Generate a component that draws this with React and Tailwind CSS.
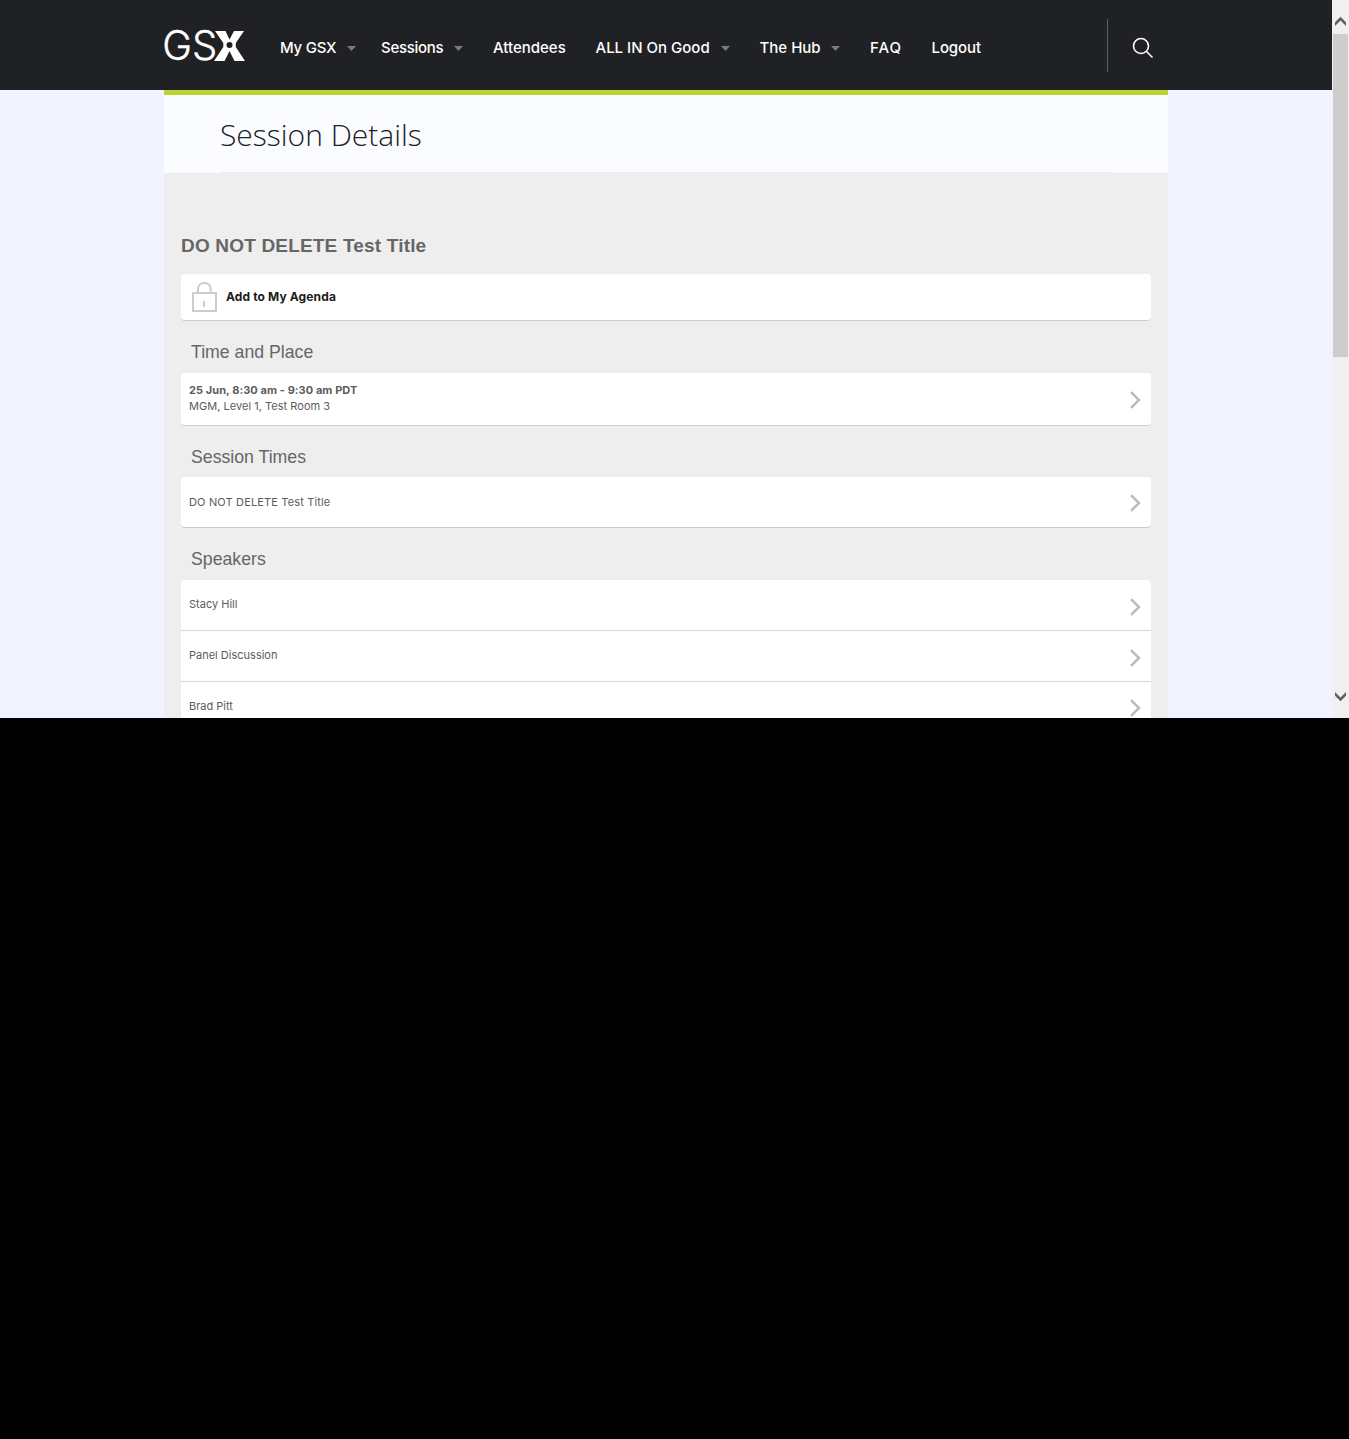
import React from "react";

function Logo() {
  return (
    <svg className="block h-[33px] w-[82px] overflow-visible" viewBox="0 0 82 33" role="img" aria-label="GSX">
      <text x="-1.8" y="30.3" fill="#fff" stroke="#fff" strokeWidth="0.35" fontFamily="Inter, sans-serif" fontWeight="300" fontSize="40.5" textLength="55" lengthAdjust="spacingAndGlyphs">GS</text>
      <path d="M51 1H61.5L65.5 9.5L70 1H80L71.8 13V17L81 31H70.5L65.5 21L60.5 31H50L59.3 17V13Z" fill="#fff" />
      <circle cx="65.5" cy="15" r="5" fill="#fff" />
      <circle cx="65.5" cy="15" r="3" fill="#202124" />
    </svg>
  );
}

function Caret({ className }) {
  return (
    <svg className={`block h-[5px] w-[9px] shrink-0 ${className}`} viewBox="0 0 9 5">
      <path d="M0 0H9L4.5 5Z" fill="#7a7b7d" />
    </svg>
  );
}

function NavItem({ label, width, menu }) {
  return (
    <a className={`flex shrink-0 items-center ${width}`}>
      <span>{label}</span>
      {menu && <Caret className="ml-auto" />}
    </a>
  );
}

function Chevron({ className = "" }) {
  return (
    <svg className={`block h-[18px] w-[12px] shrink-0 ${className}`} viewBox="0 0 12 18" fill="none">
      <path d="M1 1.2L9 9L1 16.8" stroke="#bbb" strokeWidth="2.5" />
    </svg>
  );
}

function Lock() {
  return (
    <svg className="block h-[31px] w-[26px] shrink-0" viewBox="0 0 26 31" fill="none" stroke="#ccc" strokeWidth="2">
      <rect x="2" y="11" width="23" height="18" />
      <path d="M7 11V7C7 3.3 9.8 0.9 13.3 0.9S19.6 3.3 19.6 7V11" />
      <path d="M13 19V25" />
    </svg>
  );
}

function Heading({ children, className }) {
  return (
    <h2 className={`flex items-center pl-[10px] font-['Liberation_Sans',sans-serif] text-[17.7px] leading-none text-[#666] ${className}`}>
      {children}
    </h2>
  );
}

function SpeakerRow({ name }) {
  return (
    <li className="flex h-[51px] shrink-0 border-b border-[#d6d6d6] pr-[9px] pl-2">
      <span className="mt-[16px] flex-1 leading-4">{name}</span>
      <Chevron className="mt-[18px]" />
    </li>
  );
}

function Scrollbar() {
  return (
    <div className="flex w-[17px] shrink-0 flex-col items-center bg-[#f0f0f0]">
      <svg className="mt-4 block h-[10px] w-[11px]" viewBox="0 0 11 10">
        <path d="M0 6.3L5.5 0.8L11 6.3V10L5.5 4.5L0 10Z" fill="#606060" />
      </svg>
      <div className="mt-2 h-[323px] w-[15px] bg-[#cdcdcd]" />
      <svg className="mt-auto mb-4 block h-[10px] w-[11px]" viewBox="0 0 11 10">
        <path d="M0 3.7L5.5 9.2L11 3.7V0L5.5 5.5L0 0Z" fill="#606060" />
      </svg>
    </div>
  );
}

export default function App() {
  return (
    <div className="h-[1439px] w-[1349px] overflow-hidden bg-black font-[Inter,sans-serif]">
      <div className="flex h-[718px] overflow-hidden">
        <div className="flex w-[1332px] shrink-0 flex-col overflow-hidden bg-[#f1f4ff]">
          <header className="h-[90px] shrink-0 bg-[#202124]">
            <div className="ml-[164px] flex h-full w-[1004px]">
              <div className="mt-[30px] w-[116px] shrink-0"><Logo /></div>
              <nav className="mt-[38px] flex h-5 items-center text-[15px] leading-5 font-medium whitespace-nowrap text-white">
                <NavItem label="My GSX" width="w-[76px] mr-[25px] tracking-[-0.25px]" menu />
                <NavItem label="Sessions" width="w-[82px] mr-[30px] tracking-[-0.28px]" menu />
                <NavItem label="Attendees" width="w-[73px] mr-[29.5px]" />
                <NavItem label="ALL IN On Good" width="w-[134.5px] mr-[29.5px]" menu />
                <NavItem label="The Hub" width="w-[80.5px] mr-[30px]" menu />
                <NavItem label="FAQ" width="w-[32px] mr-[29.5px] tracking-[1px]" />
                <NavItem label="Logout" width="w-[50px] tracking-[-0.1px]" />
              </nav>
              <div className="mt-[19px] ml-auto h-[53px] w-px shrink-0 bg-[#606164]" />
              <svg className="mt-[37px] mr-[14px] ml-[24px] block h-[22px] w-[22px] shrink-0" viewBox="0 0 22 22" fill="none" stroke="#fff" strokeWidth="1.6">
                <circle cx="9" cy="9" r="7.5" />
                <path d="M14.3 14.3L20.5 20.5" />
              </svg>
            </div>
          </header>
          <main className="ml-[164px] flex w-[1004px] flex-1 flex-col bg-[#eee]">
            <div className="h-[83px] shrink-0 border-t-[5px] border-[#bad532] bg-[#fbfcff] px-14">
              <h1 className="flex h-[78px] items-center border-b border-[#eeeef0] pt-[2px] font-['Open_Sans',sans-serif] text-[30px] leading-none font-light text-[#202124]">
                Session Details
              </h1>
            </div>
            <div className="flex flex-col px-[17px] text-[11px] text-[#5c5c5c]">
              <h2 className="mt-[61px] h-[40px] font-['Liberation_Sans',sans-serif] text-[19px] leading-6 font-bold tracking-[0.18px] text-[#666]">
                DO NOT DELETE Test Title
              </h2>
              <div className="flex h-[47px] items-center gap-[9px] rounded-[4px] border-b border-[#ccc] bg-white pl-[10px]">
                <Lock />
                <span className="text-[12px] font-bold tracking-[0.13px] text-[#1c1c1c]">Add to My Agenda</span>
              </div>
              <Heading className="h-[52px] pt-[12px]">Time and Place</Heading>
              <div className="flex h-[53px] items-center rounded-[4px] border-b border-[#ccc] bg-white pr-[9px] pl-2">
                <div className="flex-1 pb-[3px] leading-4">
                  <div className="font-bold tracking-[0.07px]">25 Jun, 8:30 am - 9:30 am PDT</div>
                  <div className="tracking-[0.03px]">MGM, Level 1, Test Room 3</div>
                </div>
                <Chevron className="mt-[2px]" />
              </div>
              <Heading className="h-[51px] pt-[13px]">Session Times</Heading>
              <div className="flex h-[51px] items-center rounded-[4px] border-b border-[#ccc] bg-white pr-[9px] pl-2">
                <span className="flex-1 tracking-[0.15px]">DO NOT DELETE Test Title</span>
                <Chevron className="mt-[2px]" />
              </div>
              <Heading className="h-[52px] pt-[11px]">Speakers</Heading>
              <ul className="flex flex-col rounded-t-[4px] bg-white">
                <SpeakerRow name="Stacy Hill" />
                <SpeakerRow name="Panel Discussion" />
                <li className="flex h-[36px] shrink-0 overflow-hidden pr-[9px] pl-2">
                  <span className="mt-[16px] flex-1 leading-4">Brad Pitt</span>
                  <Chevron className="mt-[17px]" />
                </li>
              </ul>
            </div>
          </main>
        </div>
        <Scrollbar />
      </div>
    </div>
  );
}
